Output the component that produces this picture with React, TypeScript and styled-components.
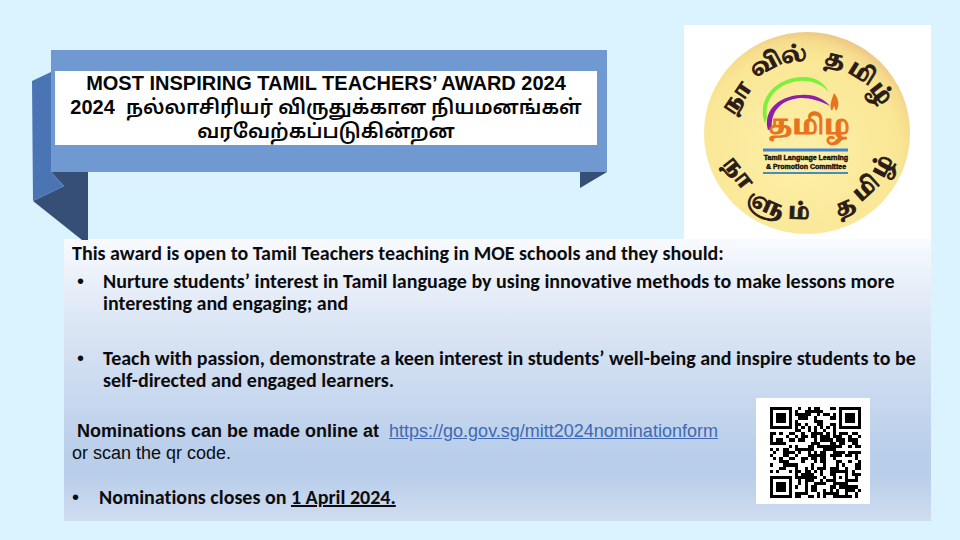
import React from 'react';
import styled, { createGlobalStyle } from 'styled-components';

const GlobalStyle = createGlobalStyle`
  *, *::before, *::after { box-sizing: border-box; }
  body { margin: 0; background: #dbf2ff; color: #0c0c0f; }
`;

const sans = '"Liberation Sans", Arial, sans-serif';
const humanist = 'Carlito, Calibri, Lato, sans-serif';

const Slide = styled.main`
  min-height: 100vh;
  padding: 25px 29px 19px 32px;
  background: #dbf2ff;
`;

const Header = styled.header`
  display: flex;
  justify-content: space-between;
  align-items: flex-start;
  gap: 77px;
`;

const Ribbon = styled.div`
  position: relative;
  flex: 1;
  min-width: 0;
  margin-top: 25px;
  padding-left: 19px;
`;

const RibbonFront = styled.div`
  position: relative;
  padding: 21px 10px 27px 4px;
  background: #7099d1;
`;

const LeftFold = styled.svg`
  position: absolute;
  left: 0;
  top: 20px;
  width: 58px;
  height: 170px;
`;

const RightFold = styled.svg`
  position: absolute;
  right: 0;
  top: 100%;
  width: 27px;
  height: 16px;
`;

const Title = styled.h1`
  margin: 0;
  min-height: 74px;
  background: #fff;
  color: #060606;
  text-align: center;
  white-space: nowrap;
  font: bold 20px/24px ${sans};
`;

const TitleLine = styled.span`
  display: block;
  height: 24px;
`;

const Tamil = styled.span`
  font-family: "Noto Sans Tamil", "Lohit Tamil", ${sans};
  font-weight: 650;
`;

const LogoCard = styled.div`
  flex: none;
  width: 247px;
  height: 214px;
  background: #fff;
`;

const Emblem = styled.svg`
  display: block;
  width: 247px;
  height: 216px;
`;

const Panel = styled.section`
  margin-left: 32px;
  padding: 3px 8px 13px 8px;
  background: linear-gradient(#f8fafe 0%, #dde7f5 28%, #b9ceea 76%, #b9ceea 84%, #d0ddf0 100%);
  font: bold 20px/22px ${humanist};
  font-variant-ligatures: none;
`;

const Lead = styled.p`
  margin: 0 0 6px;
`;

const Criteria = styled.ul`
  display: grid;
  gap: 33px;
  margin: 0;
  padding: 0;
  list-style: none;
`;

const Criterion = styled.li<{ $inset?: boolean }>`
  display: grid;
  grid-template-columns: ${p => (p.$inset ? '27px' : '26px')} 1fr;
  padding-left: ${p => (p.$inset ? '0' : '5px')};

  &::before {
    content: "•";
    font: 20px/22px ${sans};
  }
`;

const Lower = styled.div`
  display: grid;
  grid-template-columns: 1fr auto;
  align-items: start;
  margin-top: 7px;
`;

const Submission = styled.div`
  padding-top: 22px;
`;

const Online = styled.p`
  margin: 0 0 22px;
  font: 18px/22px ${sans};
`;

const Invite = styled.strong`
  margin: 0 10px 0 5px;
`;

const FormLink = styled.a`
  color: #3f69b5;
  text-decoration: underline;
`;

const QrCard = styled.div`
  margin-right: 53px;
  padding: 9px 9px 6px 14px;
  background: #fff;
`;

const QrCode = styled.svg`
  display: block;
  width: 91px;
  height: 91px;
`;

const FORM_URL = 'https://go.gov.sg/mitt2024nominationform';

const SIZE = 29;
const DATA_LEN = 55;
const ECC_LEN = 15;
const LEVEL = 1;
const MASK = 7;

/* Product of two elements of GF(256). */
function multiply(a: number, b: number): number {
  let r = 0;
  for (let i = 7; i >= 0; i--) {
    r = (r << 1) ^ ((r >>> 7) * 0x11d);
    r ^= ((b >>> i) & 1) * a;
  }
  return r & 255;
}

/* Payload bytes followed by their Reed-Solomon remainder. */
function codewords(text: string): number[] {
  const bits: number[] = [];
  const put = (v: number, n: number) => {
    for (let i = n - 1; i >= 0; i--) bits.push((v >>> i) & 1);
  };
  put(4, 4);
  put(text.length, 8);
  for (const c of text) put(c.charCodeAt(0), 8);
  put(0, Math.min(4, DATA_LEN * 8 - bits.length));
  while (bits.length % 8) bits.push(0);
  for (let pad = 0xec; bits.length < DATA_LEN * 8; pad ^= 0xec ^ 0x11) put(pad, 8);
  const data: number[] = [];
  for (let i = 0; i < bits.length; i += 8) data.push(parseInt(bits.slice(i, i + 8).join(''), 2));

  const gen: number[] = new Array(ECC_LEN).fill(0);
  gen[ECC_LEN - 1] = 1;
  let root = 1;
  for (let i = 0; i < ECC_LEN; i++) {
    for (let j = 0; j < ECC_LEN; j++) {
      gen[j] = multiply(gen[j], root);
      if (j + 1 < ECC_LEN) gen[j] ^= gen[j + 1];
    }
    root = multiply(root, 2);
  }
  const rem: number[] = new Array(ECC_LEN).fill(0);
  for (const byte of data) {
    const factor = byte ^ (rem.shift() as number);
    rem.push(0);
    gen.forEach((g, i) => { rem[i] ^= multiply(g, factor); });
  }
  return [...data, ...rem];
}

/* Version 3 symbol as one SVG path. */
function qrPath(text: string): string {
  const dark = Array.from({ length: SIZE }, () => new Array<boolean>(SIZE).fill(false));
  const fixed = Array.from({ length: SIZE }, () => new Array<boolean>(SIZE).fill(false));
  const set = (x: number, y: number, d: boolean) => {
    if (x >= 0 && y >= 0 && x < SIZE && y < SIZE) {
      dark[y][x] = d;
      fixed[y][x] = true;
    }
  };
  for (let i = 0; i < SIZE; i++) {
    set(6, i, i % 2 === 0);
    set(i, 6, i % 2 === 0);
  }
  for (const [cx, cy] of [[3, 3], [25, 3], [3, 25]])
    for (let dy = -4; dy <= 4; dy++)
      for (let dx = -4; dx <= 4; dx++) {
        const d = Math.max(Math.abs(dx), Math.abs(dy));
        set(cx + dx, cy + dy, d !== 2 && d !== 4);
      }
  for (let dy = -2; dy <= 2; dy++)
    for (let dx = -2; dx <= 2; dx++)
      set(22 + dx, 22 + dy, Math.max(Math.abs(dx), Math.abs(dy)) !== 1);

  const info = (LEVEL << 3) | MASK;
  let r = info;
  for (let i = 0; i < 10; i++) r = (r << 1) ^ ((r >>> 9) * 0x537);
  const format = ((info << 10) | r) ^ 0x5412;
  const bit = (i: number) => ((format >>> i) & 1) === 1;
  for (let i = 0; i <= 5; i++) set(8, i, bit(i));
  set(8, 7, bit(6));
  set(8, 8, bit(7));
  set(7, 8, bit(8));
  for (let i = 9; i < 15; i++) set(14 - i, 8, bit(i));
  for (let i = 0; i < 8; i++) set(SIZE - 1 - i, 8, bit(i));
  for (let i = 8; i < 15; i++) set(8, SIZE - 15 + i, bit(i));
  set(8, SIZE - 8, true);

  const words = codewords(text);
  let k = 0;
  for (let right = SIZE - 1; right >= 1; right -= 2) {
    if (right === 6) right = 5;
    for (let v = 0; v < SIZE; v++)
      for (let j = 0; j < 2; j++) {
        const x = right - j;
        const y = ((right + 1) & 2) === 0 ? SIZE - 1 - v : v;
        if (!fixed[y][x] && k < words.length * 8) {
          dark[y][x] = ((words[k >>> 3] >>> (7 - (k & 7))) & 1) === 1;
          k++;
        }
      }
  }
  let path = '';
  for (let y = 0; y < SIZE; y++)
    for (let x = 0; x < SIZE; x++) {
      const flip = !fixed[y][x] && (((x + y) % 2) + ((x * y) % 3)) % 2 === 0;
      if (dark[y][x] !== flip) path += `M${x} ${y}h1v1h-1z`;
    }
  return path;
}

/* Letters round the emblem's rim: text, centre and tilt. */
const rim: [string, number, number, number][] = [
  ['நா', 53, 73, -56],
  ['வி', 82, 39, -28],
  ['ல்', 110, 30, -8],
  ['த', 151, 35, 14],
  ['மி', 178, 48, 32],
  ['ழ்', 197, 68, 52],
  ['நா', 54, 148, 52],
  ['ளு', 82, 180, 24],
  ['ம்', 115, 187, 2],
  ['த', 161, 182, -24],
  ['மி', 182, 163, -42],
  ['ழ்', 198, 141, -62],
];

const RimLetter = styled.text`
  font: bold 22px "Noto Serif Tamil", "Liberation Serif", serif;
  text-anchor: middle;
  fill: #2c1c18;
  stroke: #2c1c18;
  stroke-width: 1;
`;

const EmblemWord = styled.text`
  font: bold 26px "Noto Serif Tamil", "Liberation Serif", serif;
  text-anchor: middle;
  fill: #e8731f;
  stroke: #e8731f;
  stroke-width: 1;
`;

const EmblemCaption = styled.text`
  font: bold 7px ${sans};
  text-anchor: middle;
  fill: #15110c;
  stroke: #15110c;
  stroke-width: 0.4;
`;

function CommitteeEmblem() {
  return (
    <Emblem viewBox="0 0 247 216" role="img" aria-label="Tamil Language Learning & Promotion Committee">
      <defs>
        <radialGradient id="disc" cx="0.46" cy="0.6" r="0.62">
          <stop offset="0" stopColor="#fdf0a8" />
          <stop offset="0.78" stopColor="#fae796" />
          <stop offset="0.9" stopColor="#f5dc8c" />
          <stop offset="1" stopColor="#ecc184" />
        </radialGradient>
      </defs>
      <ellipse cx="123" cy="108" rx="103" ry="101" fill="url(#disc)" />
      {rim.map(([letter, x, y, tilt]) => (
        <RimLetter key={`${x}-${y}`} transform={`translate(${x} ${y}) rotate(${tilt})`} y="7">{letter}</RimLetter>
      ))}
      <path d="M81 98C73 80 86 54 117 52C130 51 140 57 145 67C137 59 127 55 115 56C94 58 80 74 83 92Z" fill="#7cf03a" />
      <path d="M84 105C79 88 92 71 117 70C130 69 140 74 146 81C137 76 127 73 117 73C98 74 86 86 88 104Z" fill="#8f1fa8" />
      <EmblemWord x="125" y="109">தமிழ</EmblemWord>
      <path d="M150 68C156 75 155 82 152 86L150 81L148 86C145 82 147 76 150 68Z" fill="#e8731f" />
      <path d="M79 125H164" stroke="#3d86d8" strokeWidth="3" />
      <EmblemCaption x="122" y="135">Tamil Language Learning</EmblemCaption>
      <EmblemCaption x="122" y="144">&amp; Promotion Committee</EmblemCaption>
      <path d="M79 148H164" stroke="#4a8cb8" strokeWidth="2" />
    </Emblem>
  );
}

export default function App() {
  return (
    <>
      <GlobalStyle />
      <Slide>
        <Header>
          <Ribbon>
            <LeftFold viewBox="0 0 58 170" aria-hidden="true">
              <path d="M19 102H56V170H50L1 131L32 116Z" fill="#364f77" />
              <path d="M0 11L19 2V102L32 116L1 131Z" fill="#4a74b4" />
            </LeftFold>
            <RightFold viewBox="0 0 27 16" aria-hidden="true">
              <path d="M0 0H27L0 16Z" fill="#364f77" />
            </RightFold>
            <RibbonFront>
              <Title>
                <TitleLine>MOST INSPIRING TAMIL TEACHERS’ AWARD 2024</TitleLine>
                <TitleLine>2024 &nbsp;<Tamil lang="ta">நல்லாசிரியர் விருதுக்கான நியமனங்கள்</Tamil></TitleLine>
                <TitleLine><Tamil lang="ta">வரவேற்கப்படுகின்றன</Tamil></TitleLine>
              </Title>
            </RibbonFront>
          </Ribbon>
          <LogoCard><CommitteeEmblem /></LogoCard>
        </Header>
        <Panel>
          <Lead>This award is open to Tamil Teachers teaching in MOE schools and they should:</Lead>
          <Criteria>
            <Criterion>Nurture students’ interest in Tamil language by using innovative methods to make lessons more interesting and engaging; and</Criterion>
            <Criterion>Teach with passion, demonstrate a keen interest in students’ well-being and inspire students to be self-directed and engaged learners.</Criterion>
          </Criteria>
          <Lower>
            <Submission>
              <Online>
                <Invite>Nominations can be made online at</Invite>
                <FormLink href={FORM_URL}>{FORM_URL}</FormLink>
                <br />
                or scan the qr code.
              </Online>
              <Criteria>
                <Criterion $inset><span>Nominations closes on <u>1 April 2024.</u></span></Criterion>
              </Criteria>
            </Submission>
            <QrCard>
              <QrCode viewBox="0 0 29 29" shapeRendering="crispEdges" role="img" aria-label="QR code of the nomination form">
                <path d={qrPath(FORM_URL)} />
              </QrCode>
            </QrCard>
          </Lower>
        </Panel>
      </Slide>
    </>
  );
}
